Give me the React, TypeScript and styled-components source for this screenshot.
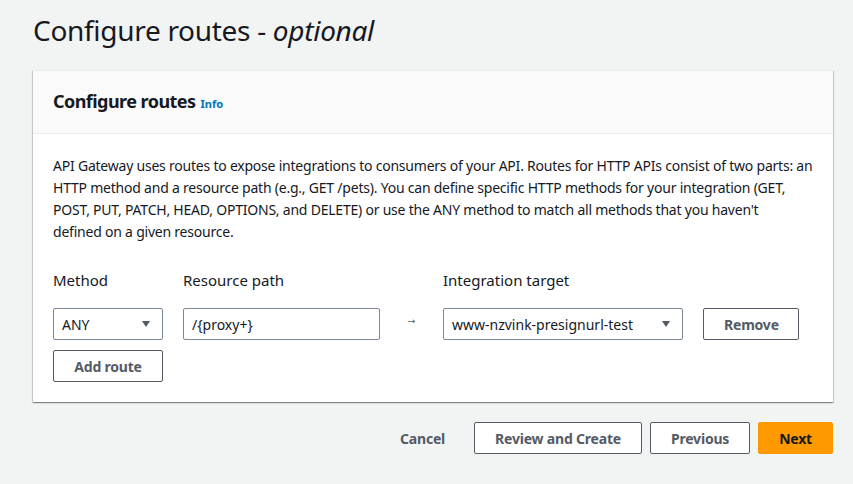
import React from "react";
import styled, { createGlobalStyle } from "styled-components";

const Global = createGlobalStyle`
  html, body { margin: 0; padding: 0; background: #f2f3f3; }
  body { font-family: "Noto Sans", "Open Sans", Arial, sans-serif; color: #16191f; }
  * { box-sizing: border-box; }
`;

const Page = styled.div`
  padding: 12px 20px 0 33px;
`;

const Title = styled.h1`
  margin: 0 0 22px 0;
  font-size: 28px;
  line-height: 36px;
  font-weight: 400;
  letter-spacing: -0.3px;
  color: #16191f;
  em { font-style: italic; }
`;

const Card = styled.section`
  background: #fff;
  border-top: 1px solid #eaeded;
  box-shadow: 0 1px 1px 0 rgba(0, 28, 36, 0.3), 1px 1px 1px 0 rgba(0, 28, 36, 0.15),
    -1px 1px 1px 0 rgba(0, 28, 36, 0.15);
`;

const CardHeader = styled.div`
  background: #fafafa;
  border-bottom: 1px solid #eaeded;
  padding: 18px 20px 20px 20px;
  display: flex;
  align-items: baseline;
  gap: 5px;
`;

const CardTitle = styled.h2`
  margin: 0;
  font-size: 18px;
  line-height: 24px;
  font-weight: 700;
  letter-spacing: -0.55px;
`;

const InfoLink = styled.a`
  font-size: 11px;
  font-weight: 700;
  color: #0073bb;
  text-decoration: none;
`;

const CardBody = styled.div`
  padding: 21px 20px 20px 20px;
`;

const Description = styled.p`
  margin: 0 0 26px 0;
  font-size: 14px;
  line-height: 22px;
  letter-spacing: -0.22px;
`;

const RouteGrid = styled.div`
  display: grid;
  grid-template-columns: 110px 197px 23px 240px 96px;
  column-gap: 20px;
  align-items: center;
`;

const Label = styled.label`
  font-size: 15px;
  line-height: 22px;
  margin-bottom: 17px;
  color: #16191f;
`;

const Field = styled.div`
  height: 32px;
  border: 1px solid #7d8998;
  border-radius: 2px;
  background: #fff;
  display: flex;
  align-items: center;
  padding: 0 12px 0 8px;
  font-size: 14px;
  color: #16191f;
  justify-content: space-between;
`;

const Caret = styled.span`
  width: 0;
  height: 0;
  border-left: 4.5px solid transparent;
  border-right: 4.5px solid transparent;
  border-top: 6px solid #545b64;
`;

const Arrow = styled.span`
  text-align: center;
  font-family: "DejaVu Sans", sans-serif;
  font-size: 9px;
  color: #545b64;
  line-height: 1;
  padding-bottom: 6px;
`;

const Button = styled.button<{ $variant?: "normal" | "primary" | "link" }>`
  height: 32px;
  padding: 0 20px;
  border-radius: 2px;
  font-family: inherit;
  font-size: 14px;
  font-weight: 700;
  letter-spacing: -0.2px;
  cursor: pointer;
  white-space: nowrap;
  border: 1px solid
    ${(p) => (p.$variant === "primary" ? "#ff9900" : p.$variant === "link" ? "transparent" : "#545b64")};
  background: ${(p) => (p.$variant === "primary" ? "#ff9900" : p.$variant === "link" ? "transparent" : "#fff")};
  color: ${(p) => (p.$variant === "primary" ? "#16191f" : "#545b64")};
`;

const AddButton = styled(Button)`
  margin-top: 10px;
  grid-column: 1;
`;

const Footer = styled.div`
  display: flex;
  justify-content: flex-end;
  gap: 8px;
  margin-top: 20px;
`;

export default function App() {
  return (
    <>
      <Global />
      <Page>
        <Title>
          Configure routes - <em>optional</em>
        </Title>
        <Card>
          <CardHeader>
            <CardTitle>Configure routes</CardTitle>
            <InfoLink href="#">Info</InfoLink>
          </CardHeader>
          <CardBody>
            <Description>
              API Gateway uses routes to expose integrations to consumers of your API. Routes for HTTP APIs consist of
              two parts: an HTTP method and a resource path (e.g., GET /pets). You can define specific HTTP methods for
              your integration (GET, POST, PUT, PATCH, HEAD, OPTIONS, and DELETE) or use the ANY method to match all
              methods that you haven't
              <br />
              defined on a given resource.
            </Description>
            <RouteGrid>
              <Label>Method</Label>
              <Label>Resource path</Label>
              <span />
              <Label>Integration target</Label>
              <span />

              <Field>
                <span>ANY</span>
                <Caret />
              </Field>
              <Field>/{"{proxy+}"}</Field>
              <Arrow>→</Arrow>
              <Field>
                <span>www-nzvink-presignurl-test</span>
                <Caret />
              </Field>
              <Button>Remove</Button>

              <AddButton>Add route</AddButton>
            </RouteGrid>
          </CardBody>
        </Card>
        <Footer>
          <Button $variant="link">Cancel</Button>
          <Button>Review and Create</Button>
          <Button>Previous</Button>
          <Button $variant="primary">Next</Button>
        </Footer>
      </Page>
    </>
  );
}
